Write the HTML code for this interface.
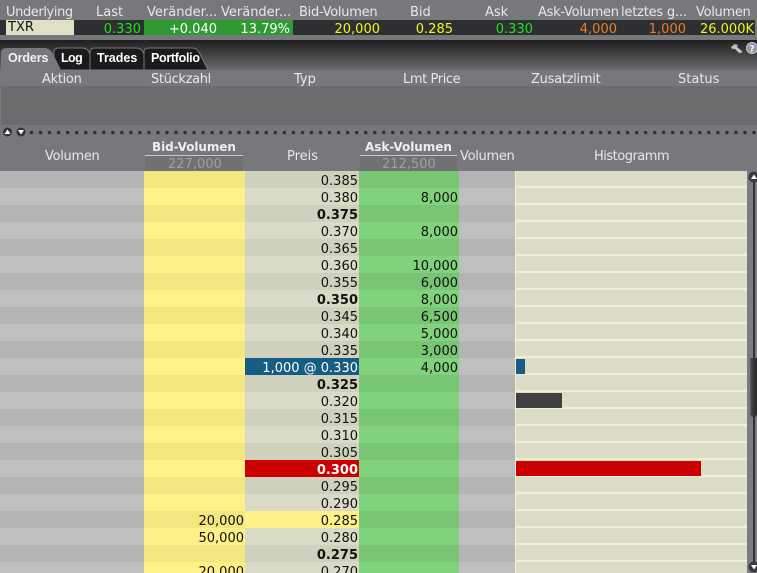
<!DOCTYPE html>
<html><head><meta charset="utf-8"><style>
html,body{margin:0;padding:0;width:757px;height:573px;overflow:hidden}
#w{width:757px;height:573px;overflow:hidden;position:relative;background:#77787c;font:13px/17px "DejaVu Sans",sans-serif}
.a{position:absolute}
.t{position:absolute;white-space:nowrap;line-height:17px}
.h{color:#e8e8e8}
.tb{color:#fff;font-size:12.500px;font-weight:bold;font-family:"Liberation Sans",sans-serif}
.r{position:absolute;left:0;width:757px;height:17px}
.r div{position:absolute;top:0;height:17px;line-height:21px;text-align:right;box-sizing:border-box;padding-right:1px;color:#111;white-space:nowrap}
.v1{left:0;width:144px;background:#bfbfbf}
.b{left:144px;width:101px;background:#fff188}
.p{left:245px;width:114px;background:#d9dbc6}
.s{left:359px;width:100px;background:#80d27c}
.v2{left:459px;width:56px;background:#bfbfbf}
.r .g{left:515px;width:232px;background:#dcddc6;border-left:1px solid #f4efd2;border-bottom:2px solid #f4efd2}
.d .v1,.d .v2{background:#b4b4b4}
.d .b{background:#f3e77f}
.d .p{background:#cfd1bd}
.d .s{background:#78c675}
.r .B{font-weight:bold}
.bar{position:absolute;left:516px;height:15px}
</style></head><body><div id="w">
<!-- top grid -->
<div class="a" style="left:0;top:20px;width:755px;height:15px;background:#2e2f31"></div>
<div class="a" style="left:6px;top:20px;width:68px;height:15px;background:#dfe0c6"></div>
<div class="a" style="left:144px;top:20px;width:149px;height:15px;background:#2f9a32"></div>
<div class="t h" style="left:6px;top:4px;letter-spacing:-.4px">Underlying</div>
<div class="t h" style="left:96px;top:4px">Last</div>
<div class="t h" style="left:147px;top:4px">Veränder...</div>
<div class="t h" style="left:221px;top:4px">Veränder...</div>
<div class="t h" style="left:299px;top:4px;letter-spacing:-.27px">Bid-Volumen</div>
<div class="t h" style="left:410px;top:4px">Bid</div>
<div class="t h" style="left:485px;top:4px">Ask</div>
<div class="t h" style="left:538px;top:4px;letter-spacing:-.27px">Ask-Volumen</div>
<div class="t h" style="left:621px;top:4px;letter-spacing:-.2px">letztes g...</div>
<div class="t h" style="left:696px;top:4px;letter-spacing:-.3px">Volumen</div>
<div class="t" style="left:8px;top:19px;color:#111">TXR</div>
<div class="t" style="right:616px;top:21px;color:#18e818">0.330</div>
<div class="t" style="right:540px;top:21px;color:#fff">+0.040</div>
<div class="t" style="right:467px;top:21px;color:#fff">13.79%</div>
<div class="t" style="right:377px;top:21px;color:#f4f41e">20,000</div>
<div class="t" style="right:304px;top:21px;color:#f4f41e">0.285</div>
<div class="t" style="right:224px;top:21px;color:#18e818">0.330</div>
<div class="t" style="right:140px;top:21px;color:#ee7d25">4,000</div>
<div class="t" style="right:71px;top:21px;color:#ee7d25">1,000</div>
<div class="t" style="right:3px;top:21px;color:#f4f41e">26.000K</div>
<!-- dark gradient band -->
<div class="a" style="left:0;top:40px;width:757px;height:30px;background:linear-gradient(#1f1f1f,#2a2a2a 15%,#66676a 95%)"></div>
<svg class="a" style="left:0;top:40px" width="757" height="30">
<path d="M54 30V12Q54 8 59 8H82Q88 8 90 14L91 30Z" fill="#1b1a1c" stroke="#77787c"/>
<path d="M90 30V12Q90 8 95 8H136Q142 8 144 14L145 30Z" fill="#1b1a1c" stroke="#77787c"/>
<path d="M144 30V12Q144 8 149 8H192Q197 8 199 12L208 30Z" fill="#1b1a1c" stroke="#77787c"/>
<path d="M1 30V13Q1 8 7 8H44Q50 8 53 14L61 30Z" fill="#77787c"/>
<path d="M732 6L735 4L738 5L737 7L742 11V13H739L735 9H732L731 7Z" fill="#c4c4c4" stroke="#666" stroke-width=".5"/>
<circle cx="752" cy="8" r="5.500" fill="#8f959e" stroke="#c8c8c8"/>
<text x="752" y="12" font-family="DejaVu Sans" font-size="10" font-weight="bold" fill="#eef" text-anchor="middle">?</text>
</svg>
<div class="t tb" style="left:8px;top:50px;color:#f4f4f4;letter-spacing:-.1px">Orders</div>
<div class="t tb" style="left:61px;top:50px;letter-spacing:-.6px">Log</div>
<div class="t tb" style="left:97px;top:50px">Trades</div>
<div class="t tb" style="left:151px;top:50px;letter-spacing:-.3px">Portfolio</div>
<!-- orders -->
<div class="t h" style="left:42px;top:71px;letter-spacing:-.3px">Aktion</div>
<div class="t h" style="left:151px;top:71px;letter-spacing:-.33px">Stückzahl</div>
<div class="t h" style="left:294px;top:71px">Typ</div>
<div class="t h" style="left:403px;top:71px;letter-spacing:-.4px">Lmt Price</div>
<div class="t h" style="left:531px;top:71px;letter-spacing:-.27px">Zusatzlimit</div>
<div class="t h" style="left:678px;top:71px">Status</div>
<div class="a" style="left:1px;top:86px;width:756px;height:39px;background:#6b6c6e"></div>
<!-- splitter -->
<div class="a" style="left:27px;top:130px;width:730px;height:5px;background:radial-gradient(circle at 4.500px 2.500px,#2e2e30 1.500px,transparent 2px) 0 0/9.040px 5px repeat-x"></div>
<svg class="a" style="left:0;top:125px" width="30" height="14">
<circle cx="7.500" cy="7" r="4.500" fill="#333"/><path d="M4.500 9H10.500L7.500 4.500Z" fill="#fff"/>
<circle cx="21" cy="7" r="4.500" fill="#333"/><path d="M18 5H24L21 9.500Z" fill="#fff"/>
</svg>
<!-- ladder header -->
<div class="a" style="left:145px;top:156px;width:98px;height:15px;background:#717174"></div>
<div class="a" style="left:145px;top:155px;width:98px;height:1px;background:#c8c8c8"></div>
<div class="a" style="left:360px;top:156px;width:97px;height:15px;background:#717174"></div>
<div class="a" style="left:360px;top:155px;width:97px;height:1px;background:#c8c8c8"></div>
<div class="t h" style="left:45px;top:148px;letter-spacing:-.3px">Volumen</div>
<div class="t" style="left:152px;top:139px;color:#eee;font-weight:bold;font-size:12px;letter-spacing:-.08px">Bid-Volumen</div>
<div class="t" style="left:168px;top:156px;color:#a0a0a2">227,000</div>
<div class="t h" style="left:287px;top:148px">Preis</div>
<div class="t" style="left:365px;top:139px;color:#eee;font-weight:bold;font-size:12px;letter-spacing:-.03px">Ask-Volumen</div>
<div class="t" style="left:382px;top:156px;color:#a0a0a2">212,500</div>
<div class="t h" style="left:460px;top:148px;letter-spacing:-.3px">Volumen</div>
<div class="t h" style="left:594px;top:148px;letter-spacing:-.5px">Histogramm</div>
<!-- rows -->
<div class="r d" style="top:171px"><div class="v1"></div><div class="b"></div><div class="p">0.385</div><div class="s"></div><div class="v2"></div><div class="g"></div></div>
<div class="r" style="top:188px"><div class="v1"></div><div class="b"></div><div class="p">0.380</div><div class="s">8,000</div><div class="v2"></div><div class="g"></div></div>
<div class="r d" style="top:205px"><div class="v1"></div><div class="b"></div><div class="p B">0.375</div><div class="s"></div><div class="v2"></div><div class="g"></div></div>
<div class="r" style="top:222px"><div class="v1"></div><div class="b"></div><div class="p">0.370</div><div class="s">8,000</div><div class="v2"></div><div class="g"></div></div>
<div class="r d" style="top:239px"><div class="v1"></div><div class="b"></div><div class="p">0.365</div><div class="s"></div><div class="v2"></div><div class="g"></div></div>
<div class="r" style="top:256px"><div class="v1"></div><div class="b"></div><div class="p">0.360</div><div class="s">10,000</div><div class="v2"></div><div class="g"></div></div>
<div class="r d" style="top:273px"><div class="v1"></div><div class="b"></div><div class="p">0.355</div><div class="s">6,000</div><div class="v2"></div><div class="g"></div></div>
<div class="r" style="top:290px"><div class="v1"></div><div class="b"></div><div class="p B">0.350</div><div class="s">8,000</div><div class="v2"></div><div class="g"></div></div>
<div class="r d" style="top:307px"><div class="v1"></div><div class="b"></div><div class="p">0.345</div><div class="s">6,500</div><div class="v2"></div><div class="g"></div></div>
<div class="r" style="top:324px"><div class="v1"></div><div class="b"></div><div class="p">0.340</div><div class="s">5,000</div><div class="v2"></div><div class="g"></div></div>
<div class="r d" style="top:341px"><div class="v1"></div><div class="b"></div><div class="p">0.335</div><div class="s">3,000</div><div class="v2"></div><div class="g"></div></div>
<div class="r" style="top:358px"><div class="v1"></div><div class="b"></div><div class="p" style="background:#155d85;color:#fff">1,000 @ 0.330</div><div class="s">4,000</div><div class="v2"></div><div class="g"></div></div>
<div class="r d" style="top:375px"><div class="v1"></div><div class="b"></div><div class="p B">0.325</div><div class="s"></div><div class="v2"></div><div class="g"></div></div>
<div class="r" style="top:392px"><div class="v1"></div><div class="b"></div><div class="p">0.320</div><div class="s"></div><div class="v2"></div><div class="g"></div></div>
<div class="r d" style="top:409px"><div class="v1"></div><div class="b"></div><div class="p">0.315</div><div class="s"></div><div class="v2"></div><div class="g"></div></div>
<div class="r" style="top:426px"><div class="v1"></div><div class="b"></div><div class="p">0.310</div><div class="s"></div><div class="v2"></div><div class="g"></div></div>
<div class="r d" style="top:443px"><div class="v1"></div><div class="b"></div><div class="p">0.305</div><div class="s"></div><div class="v2"></div><div class="g"></div></div>
<div class="r" style="top:460px"><div class="v1"></div><div class="b"></div><div class="p B" style="background:#cc0000;color:#fff">0.300</div><div class="s"></div><div class="v2"></div><div class="g"></div></div>
<div class="r d" style="top:477px"><div class="v1"></div><div class="b"></div><div class="p">0.295</div><div class="s"></div><div class="v2"></div><div class="g"></div></div>
<div class="r" style="top:494px"><div class="v1"></div><div class="b"></div><div class="p">0.290</div><div class="s"></div><div class="v2"></div><div class="g"></div></div>
<div class="r d" style="top:511px"><div class="v1"></div><div class="b">20,000</div><div class="p" style="background:#fff188">0.285</div><div class="s"></div><div class="v2"></div><div class="g"></div></div>
<div class="r" style="top:528px"><div class="v1"></div><div class="b">50,000</div><div class="p">0.280</div><div class="s"></div><div class="v2"></div><div class="g"></div></div>
<div class="r d" style="top:545px"><div class="v1"></div><div class="b"></div><div class="p B">0.275</div><div class="s"></div><div class="v2"></div><div class="g"></div></div>
<div class="r" style="top:562px"><div class="v1"></div><div class="b">20,000</div><div class="p">0.270</div><div class="s"></div><div class="v2"></div><div class="g"></div></div>
<!-- bars -->
<div class="bar" style="top:359px;width:9px;background:#155d85"></div>
<div class="bar" style="top:393px;width:46px;background:#404040"></div>
<div class="bar" style="top:461px;width:185px;background:#cc0000"></div>
<!-- scrollbar -->
<div class="a" style="left:747px;top:171px;width:10px;height:402px;background:#7b7c80"></div>
<div class="a" style="left:753px;top:178px;width:2px;height:390px;background:#303134"></div>
<div class="a" style="left:750px;top:358px;width:7px;height:59px;background:linear-gradient(90deg,#5c5d60,#333436 50%,#2b2c2e);border-radius:0 0 3px 3px"></div>
<svg class="a" style="left:747px;top:171px" width="10" height="402">
<circle cx="7" cy="6" r="5.500" fill="#3a3b3d"/><path d="M4 8H10L7 3.500Z" fill="#fff"/>
<circle cx="7" cy="396" r="5.500" fill="#3a3b3d"/><path d="M4 394H10L7 398.500Z" fill="#fff"/>
</svg>
</div></body></html>
